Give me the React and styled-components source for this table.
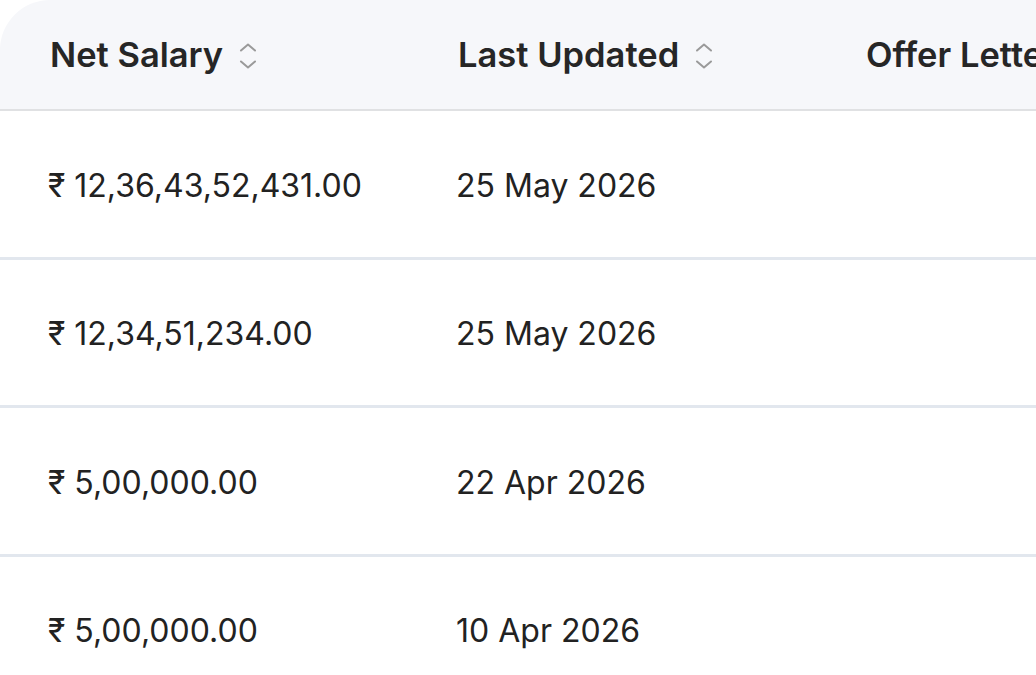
import React from 'react'
import styled, { createGlobalStyle } from 'styled-components'

const GlobalStyle = createGlobalStyle`
  html, body {
    margin: 0;
    padding: 0;
    background: #ffffff;
    font-family: Inter, 'Noto Sans', sans-serif;
    overflow: hidden;
  }
`

const rows = [
  { salary: '₹ 12,36,43,52,431.00', updated: '25 May 2026' },
  { salary: '₹ 12,34,51,234.00', updated: '25 May 2026' },
  { salary: '₹ 5,00,000.00', updated: '22 Apr 2026' },
  { salary: '₹ 5,00,000.00', updated: '10 Apr 2026' }
]

const SortIcon = () => (
  <SortSvg viewBox='0 0 18 26' width='18' height='26'>
    <path d='M2 7.5 L9 1.5 L16 7.5' />
    <path d='M2 18.5 L9 24.5 L16 18.5' />
  </SortSvg>
)

const App = () => {
  return (
    <>
      <GlobalStyle />
      <Table>
        <HeaderRow>
          <HeadCell>
            Net Salary <SortIcon />
          </HeadCell>
          <HeadCell>
            Last Updated <SortIcon />
          </HeadCell>
          <HeadCell>Offer Letter</HeadCell>
        </HeaderRow>
        {rows.map((row, i) => (
          <Row key={i} last={i === rows.length - 1}>
            <Cell>{row.salary}</Cell>
            <Cell>{row.updated}</Cell>
            <Cell />
          </Row>
        ))}
      </Table>
    </>
  )
}

const Table = styled.div`
  width: 1300px;
  display: flex;
  flex-direction: column;
`

const HeaderRow = styled.div`
  display: grid;
  grid-template-columns: 408px 408px 1fr;
  height: 109px;
  background: #f6f7fa;
  border-top-left-radius: 50px;
  border-bottom: 2px solid #e0e1e3;
  box-sizing: content-box;
`

const HeadCell = styled.div`
  display: flex;
  align-items: center;
  gap: 16px;
  padding-left: 50px;
  font-size: 34.5px;
  font-weight: 600;
  color: #262626;
  white-space: nowrap;
`

const SortSvg = styled.svg`
  fill: none;
  stroke: #9a9a9a;
  stroke-width: 2;
  stroke-linecap: round;
  stroke-linejoin: round;
  margin-top: 2px;
`

const Row = styled.div`
  display: grid;
  grid-template-columns: 408px 408px 1fr;
  height: 145.5px;
  border-bottom: ${props => (props.last ? 'none' : '3px solid #e2e7ee')};
  box-sizing: content-box;
`

const Cell = styled.div`
  display: flex;
  align-items: center;
  padding-left: 48px;
  padding-top: 3px;
  font-size: 32px;
  font-weight: 400;
  color: #222222;
  white-space: nowrap;
`

export default App
